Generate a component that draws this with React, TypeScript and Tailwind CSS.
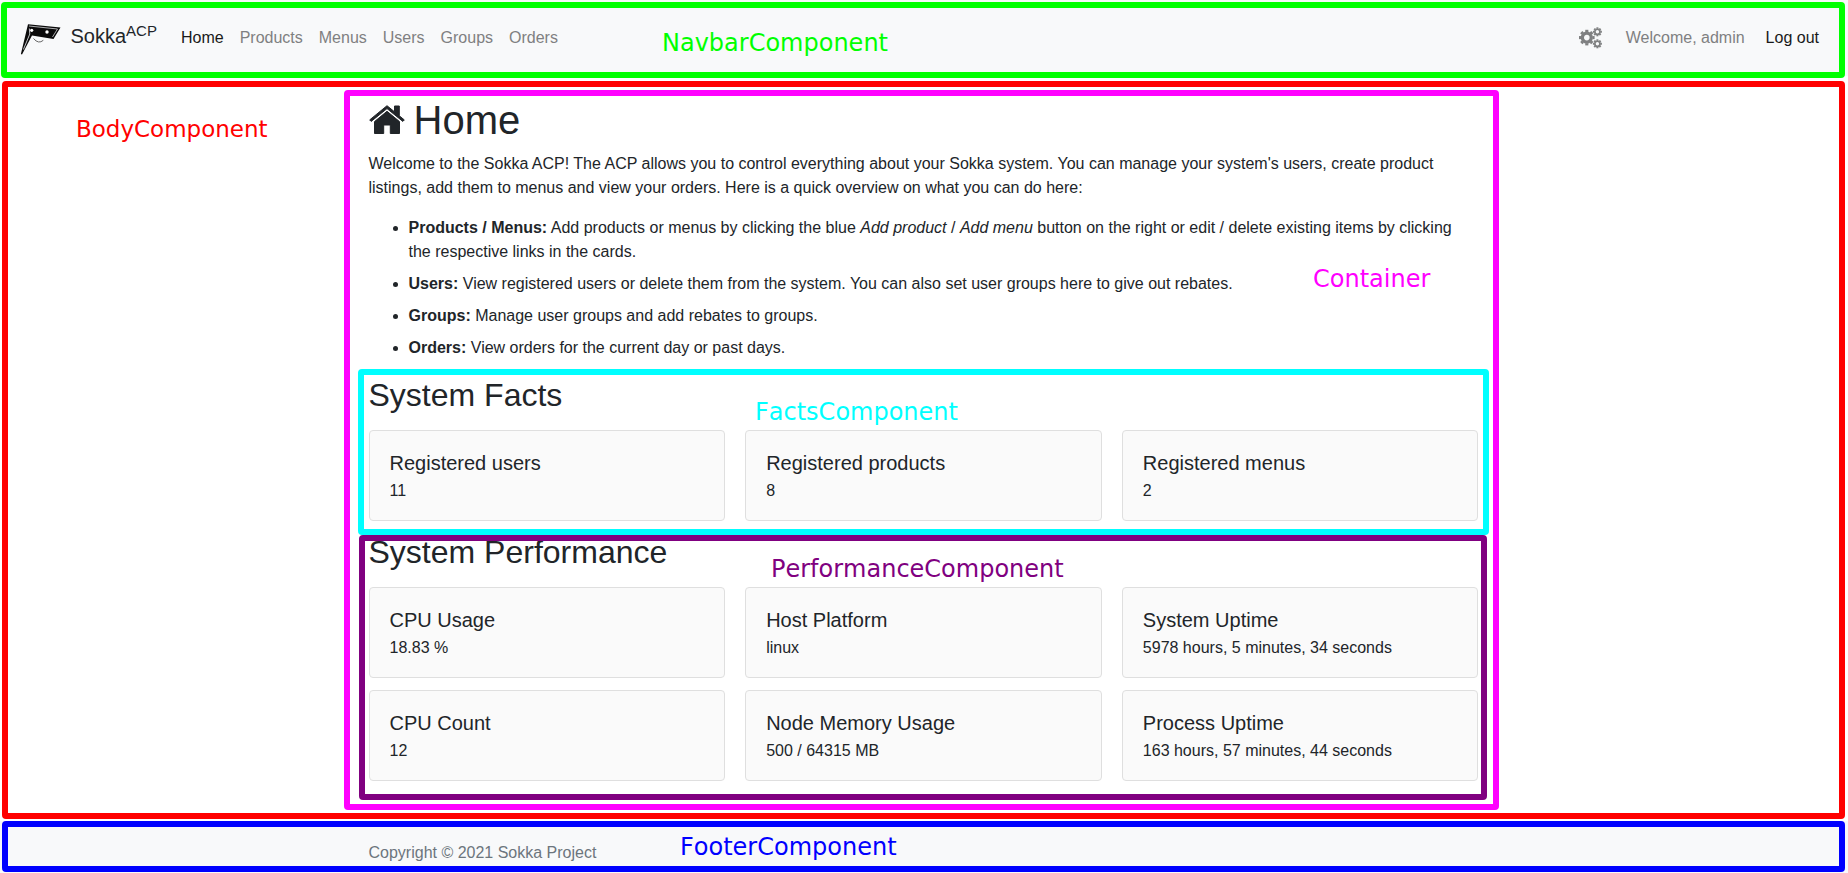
import type { ReactNode } from "react";

const navItems = ["Home", "Products", "Menus", "Users", "Groups", "Orders"];

const facts = [
  ["Registered users", "11"],
  ["Registered products", "8"],
  ["Registered menus", "2"],
];

const performance = [
  ["CPU Usage", "18.83 %"],
  ["Host Platform", "linux"],
  ["System Uptime", "5978 hours, 5 minutes, 34 seconds"],
  ["CPU Count", "12"],
  ["Node Memory Usage", "500 / 64315 MB"],
  ["Process Uptime", "163 hours, 57 minutes, 44 seconds"],
];

function Outline({ className }: { className: string }) {
  return <div className={`pointer-events-none absolute rounded-[4px] border-[6px] ${className}`} />;
}

function Label({ className, children }: { className: string; children: ReactNode }) {
  return (
    <span className={`absolute whitespace-nowrap font-['DejaVu_Sans',sans-serif] leading-[28px] [font-kerning:none] ${className}`}>
      {children}
    </span>
  );
}

function Logo() {
  return (
    <svg viewBox="0 0 42 34" className="h-[34px] w-[42px] shrink-0">
      <path d="M8 3.2 L40.5 6.6 L33.5 18 L12 14.6 L2 33.4 L0.9 33 Z" fill="#0a0a0a" />
      <path d="M9.3 7.5 L9.8 13 L3.4 28.5" stroke="#d5d7d9" strokeWidth="0.9" fill="none" />
      <path d="M9 5 L37.5 8 L32.5 16" stroke="#d5d7d9" strokeWidth="0.8" fill="none" />
      <circle cx="11.7" cy="9.3" r="1.6" fill="#fff" />
      <circle cx="27" cy="11" r="1.7" fill="#fff" />
      <path d="M13.5 17.5 Q18.5 23.5 23.3 19.3" stroke="#555" strokeWidth="0.9" fill="none" />
    </svg>
  );
}

function Gear({ cx, cy, r, hole, tooth }: { cx: number; cy: number; r: number; hole: number; tooth: number }) {
  return (
    <g stroke="#7f8081" fill="none">
      <circle cx={cx} cy={cy} r={(r + hole) / 2} strokeWidth={r - hole} />
      {[0, 45, 90, 135].map((angle) => (
        <g key={angle} transform={`rotate(${angle} ${cx} ${cy})`} strokeWidth={tooth}>
          <path d={`M${cx} ${cy - r - tooth * 0.55} V${cy - r + 0.5}`} />
          <path d={`M${cx} ${cy + r - 0.5} V${cy + r + tooth * 0.55}`} />
        </g>
      ))}
    </g>
  );
}

function CogsIcon() {
  return (
    <svg viewBox="0 0 24 22" className="ml-auto h-[22px] w-6 shrink-0">
      <Gear cx={7.8} cy={10.6} r={6.1} hole={2.8} tooth={3.1} />
      <Gear cx={18.4} cy={4.8} r={3.4} hole={1.7} tooth={2} />
      <Gear cx={18.4} cy={16.8} r={3.4} hole={1.7} tooth={2} />
    </svg>
  );
}

function HomeIcon() {
  return (
    <svg viewBox="0 0 36 29" className="mb-0.5 h-[29px] w-[36px] shrink-0" fill="#212529" stroke="#212529" strokeLinejoin="round">
      <path d="M18 0.7 L25.5 6.8 V1 H30.3 V10.8 L35.3 14.9 L33.8 16.4 L18 3.6 L2.2 16.4 L0.7 14.9 Z" strokeWidth="1" />
      <path d="M18 6.3 L30.5 16.6 V28.5 H21.3 V20 H14.7 V28.5 H5.5 V16.6 Z" strokeWidth="1" />
    </svg>
  );
}

function Cards({ items }: { items: string[][] }) {
  return (
    <div className="mt-4 grid grid-cols-3 gap-x-5 gap-y-3">
      {items.map(([title, value]) => (
        <div key={title} className="rounded-[4px] border border-[#dfdfdf] bg-[#fafafa] p-5">
          <h5 className="text-[20px] leading-6">{title}</h5>
          <h6 className="mt-1.5 text-[16px] leading-[19px]">{value}</h6>
        </div>
      ))}
    </div>
  );
}

export default function App() {
  return (
    <div className="relative flex h-[873px] flex-col overflow-hidden bg-white font-['Liberation_Sans',Arial,sans-serif] text-[16px] leading-6 text-[#212529]">
      <nav className="flex h-[76px] shrink-0 items-center bg-[#f8f9fa] pr-[29px] pl-[20px]">
        <Logo />
        <span className="mb-1 ml-[8.5px] flex text-[20px] leading-[30px]">
          Sokka<sup className="top-[-5px] text-[15px] leading-[30px]">ACP</sup>
        </span>
        <div className="ml-6 flex gap-4">
          {navItems.map((item, index) => (
            <a key={item} className={index === 0 ? "text-[#191919]" : "text-[#7f8081]"}>
              {item}
            </a>
          ))}
        </div>
        <CogsIcon />
        <span className="ml-[23px] text-[#7f8081]">Welcome, admin</span>
        <a className="ml-[21px] text-[#191919]">Log out</a>
      </nav>
      <main className="mr-px h-[745px] w-[1110px] shrink-0 self-center pt-5">
        <h1 className="flex items-start text-[40px] leading-[48px]">
          <span className="flex h-12 items-center">
            <HomeIcon />
          </span>
          <span className="ml-[9px]">Home</span>
        </h1>
        <p className="mt-2">
          Welcome to the Sokka ACP! The ACP allows you to control everything about your Sokka system. You can manage your system's users, create product listings, add them to menus and view your orders. Here is a quick overview on what you can do here:
        </p>
        <ul className="mt-4 list-disc space-y-2 pr-5 pl-10">
          <li>
            <b>Products / Menus:</b> Add products or menus by clicking the blue <i>Add product</i> / <i>Add menu</i> button on the right or edit / delete existing items by clicking the respective links in the cards.
          </li>
          <li>
            <b>Users:</b> View registered users or delete them from the system. You can also set user groups here to give out rebates.
          </li>
          <li>
            <b>Groups:</b> Manage user groups and add rebates to groups.
          </li>
          <li>
            <b>Orders:</b> View orders for the current day or past days.
          </li>
        </ul>
        <section className="mt-4">
          <h2 className="text-[32px] leading-[38.4px]">System Facts</h2>
          <Cards items={facts} />
        </section>
        <section className="mt-[11.6px]">
          <h2 className="text-[32px] leading-[38.4px]">System Performance</h2>
          <Cards items={performance} />
        </section>
      </main>
      <footer className="flex-1 bg-[#f8f9fa] pt-5 pr-px">
        <div className="mx-auto w-[1110px] text-[#6c757d]">Copyright © 2021 Sokka Project</div>
      </footer>

      <Outline className="top-[2px] left-[1px] h-[76px] w-[1844px] border-[#00ff00]" />
      <Outline className="top-[81px] left-[2px] h-[738px] w-[1843px] border-[#ff0000]" />
      <Outline className="top-[821px] left-[2px] h-[51px] w-[1843px] border-[#0000ff]" />
      <Outline className="top-[90px] left-[344px] h-[720px] w-[1155px] border-[#ff00ff]" />
      <Outline className="top-[369px] left-[358px] h-[166px] w-[1131px] border-[#00ffff]" />
      <Outline className="top-[535px] left-[359px] h-[265px] w-[1128px] border-[#800080]" />
      <Label className="top-[29px] left-[662px] text-[24px] text-[#00ff00]">NavbarComponent</Label>
      <Label className="top-[115px] left-[76px] text-[23px] text-[#ff0000]">BodyComponent</Label>
      <Label className="top-[265px] left-[1313px] text-[24px] text-[#ff00ff]">Container</Label>
      <Label className="top-[398px] left-[755px] text-[24px] text-[#00ffff]">FactsComponent</Label>
      <Label className="top-[555px] left-[771px] text-[24px] text-[#800080]">PerformanceComponent</Label>
      <Label className="top-[833px] left-[680px] text-[24px] text-[#0000ff]">FooterComponent</Label>
    </div>
  );
}
